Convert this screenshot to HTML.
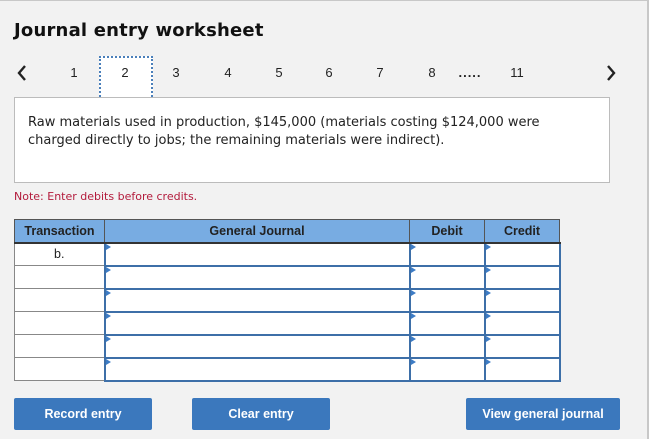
<!DOCTYPE html>
<html><head><style>
*{margin:0;padding:0;box-sizing:border-box}
body{width:660px;height:439px;background:#fff;position:relative;overflow:hidden;font-family:"DejaVu Sans",Verdana,sans-serif}
#pg{position:absolute;left:0;top:0;width:649px;height:439px;background:#f2f2f2;border-top:1px solid #c8c8c8;border-right:2px solid #c8c8c8}
.a{position:absolute}
h1{position:absolute;left:14px;top:19px;font-size:18px;font-weight:bold;color:#111;letter-spacing:0.2px}
.n{position:absolute;top:64px;font-family:"Liberation Sans",Arial,sans-serif;font-size:13px;color:#222;transform:translateX(-50%)}
.box2{position:absolute;left:99px;top:55px;width:54px;height:44px;background:#fff;border:2px dotted #4a7fba}
.txt{position:absolute;left:14px;top:96px;width:596px;height:86px;background:#fff;border:1px solid #bcbcbc;padding:16px 50px 13px 13px;font-size:13px;line-height:18px;color:#222}
.note{position:absolute;left:14px;top:189px;font-size:11px;color:#b31b3c}
table{position:absolute;left:14px;top:218px;border-collapse:collapse;font-family:"Liberation Sans",Arial,sans-serif}
th{background:#78ace2;height:23px;font-size:12.5px;font-weight:bold;color:#222;border:1px solid #555;border-bottom:2px solid #333;padding:0}
td{height:23px;background:#fff;border:1px solid #888;position:relative;font-size:12.5px;text-align:center;color:#222;padding:0}
td.i{border:2px solid #3d6fa8;border-top-color:#777}
td.i:before{content:"";position:absolute;left:0;top:0;border-left:5px solid #3d7cc5;border-top:3px solid transparent;border-bottom:3px solid transparent}
.btn{position:absolute;top:397px;height:32px;background:#3b78bd;border-radius:2px;color:#fff;font-family:"Liberation Sans",Arial,sans-serif;font-weight:bold;font-size:12.5px;text-align:center;line-height:32px}
</style></head><body>
<div id="pg">
<h1>Journal entry worksheet</h1>
<svg class="a" style="left:17px;top:64px" width="10" height="16"><path d="M8 1 L2 8 L8 15" stroke="#222" stroke-width="2.4" fill="none"/></svg>
<svg class="a" style="left:606px;top:64px" width="10" height="16"><path d="M2 1 L8 8 L2 15" stroke="#222" stroke-width="2.4" fill="none"/></svg>
<div class="box2"></div>
<div class="n" style="left:74px">1</div>
<div class="n" style="left:125px">2</div>
<div class="n" style="left:176px">3</div>
<div class="n" style="left:228px">4</div>
<div class="n" style="left:279px">5</div>
<div class="n" style="left:329px">6</div>
<div class="n" style="left:380px">7</div>
<div class="n" style="left:432px">8</div>
<div class="n" style="left:470px;font-weight:bold;letter-spacing:1px">.....</div>
<div class="n" style="left:517px">11</div>
<div class="txt">Raw materials used in production, $145,000 (materials costing $124,000 were charged directly to jobs; the remaining materials were indirect).</div>
<div class="note">Note: Enter debits before credits.</div>
<table>
<tr><th style="width:90px">Transaction</th><th style="width:305px">General Journal</th><th style="width:75px">Debit</th><th style="width:75px">Credit</th></tr>
<tr><td>b.</td><td class="i"></td><td class="i"></td><td class="i"></td></tr>
<tr><td></td><td class="i"></td><td class="i"></td><td class="i"></td></tr>
<tr><td></td><td class="i"></td><td class="i"></td><td class="i"></td></tr>
<tr><td></td><td class="i"></td><td class="i"></td><td class="i"></td></tr>
<tr><td></td><td class="i"></td><td class="i"></td><td class="i"></td></tr>
<tr><td></td><td class="i"></td><td class="i"></td><td class="i"></td></tr>
</table>
<div class="btn" style="left:14px;width:138px">Record entry</div>
<div class="btn" style="left:192px;width:138px">Clear entry</div>
<div class="btn" style="left:466px;width:154px">View general journal</div>
</div>
</body></html>
